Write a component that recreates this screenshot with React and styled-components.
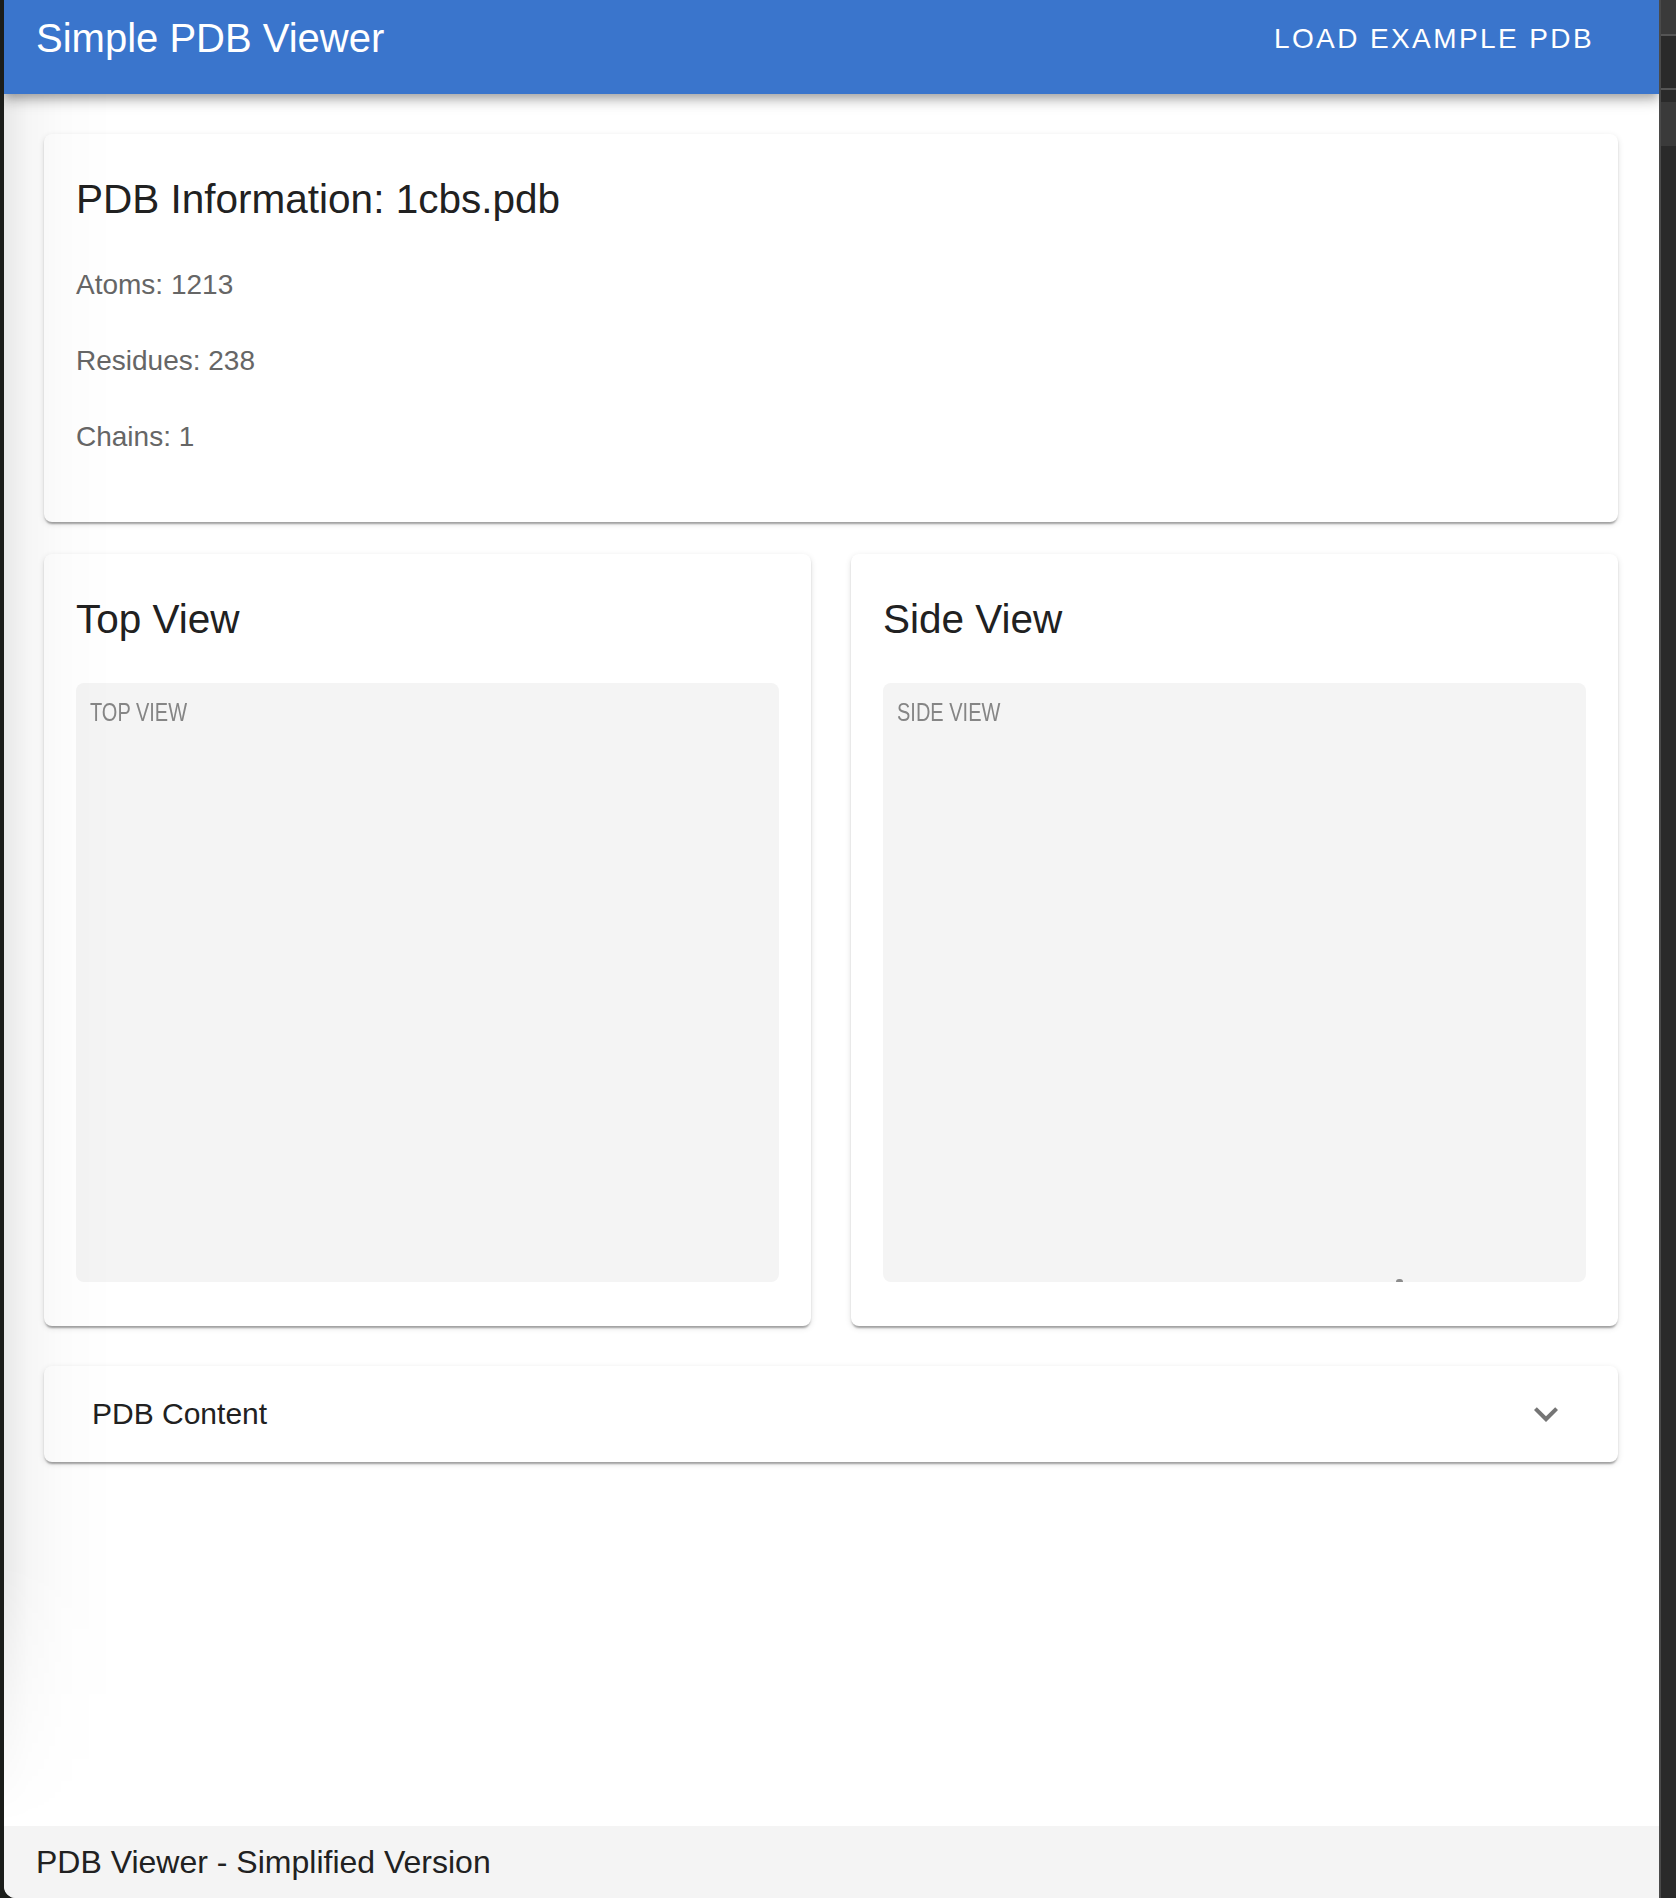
import React from 'react';
import styled, { createGlobalStyle } from 'styled-components';

const GlobalStyle = createGlobalStyle`
  html, body {
    margin: 0;
    padding: 0;
    background: #1b1d1a;
  }
  * {
    box-sizing: border-box;
  }
`;

const Desktop = styled.div`
  display: flex;
  height: 1898px;
  padding-left: 4px;
  font-family: 'Liberation Sans', Arial, Helvetica, sans-serif;
`;

const Window = styled.div`
  position: relative;
  width: 1655px;
  display: flex;
  flex-direction: column;
  background: #ffffff;
  border-bottom-left-radius: 12px;
  overflow: hidden;
`;

// soft shadow that falls over the left side of the page
const EdgeShade = styled.div`
  position: absolute;
  left: 0;
  top: 94px;
  width: 110px;
  height: 1730px;
  pointer-events: none;
  z-index: 2;
  background: linear-gradient(
    to right,
    rgba(0, 0, 0, 0.09) 0px,
    rgba(0, 0, 0, 0.035) 25px,
    rgba(0, 0, 0, 0.01) 60px,
    rgba(0, 0, 0, 0) 110px
  );
  -webkit-mask-image: linear-gradient(to bottom, #000 0%, #000 85%, transparent 100%);
  mask-image: linear-gradient(to bottom, #000 0%, #000 85%, transparent 100%);
`;

const AppBar = styled.header`
  position: relative;
  z-index: 1;
  height: 94px;
  flex-shrink: 0;
  display: flex;
  align-items: flex-start;
  justify-content: space-between;
  padding: 0 49px 0 32px;
  background: #3a75cc;
  color: #ffffff;
  box-shadow: 0 4px 8px -2px rgba(0, 0, 0, 0.2), 0 8px 10px 0 rgba(0, 0, 0, 0.14),
    0 2px 20px 0 rgba(0, 0, 0, 0.12);
`;

const AppTitle = styled.h1`
  margin: 6px 0 0;
  font-size: 40px;
  font-weight: 400;
  line-height: 64px;
`;

const AppButton = styled.button`
  margin: 0;
  padding: 14px 16px;
  border: none;
  background: transparent;
  color: #ffffff;
  font-family: inherit;
  font-size: 28px;
  font-weight: 400;
  line-height: 49px;
  letter-spacing: 2.4px;
  text-transform: uppercase;
  cursor: pointer;
`;

const Main = styled.main`
  flex: 1;
  padding: 40px 41px 0 40px;
`;

const Card = styled.section`
  background: #ffffff;
  border-radius: 8px;
  padding: ${({ $bottom }) => `32px 32px ${$bottom || 32}px`};
  box-shadow: 0 4px 2px -2px rgba(0, 0, 0, 0.2), 0 2px 2px 0 rgba(0, 0, 0, 0.14),
    0 2px 6px 0 rgba(0, 0, 0, 0.12);
`;

const CardTitle = styled.h2`
  margin: 3px 0 ${({ $gap }) => $gap}px;
  font-size: 40.5px;
  font-weight: 400;
  line-height: 60px;
  color: #212121;
`;

const InfoLine = styled.p`
  margin: 0 0 36px;
  font-size: 28px;
  line-height: 40px;
  color: #666666;

  &:last-child {
    margin-bottom: 33px;
  }
`;

const ViewRow = styled.div`
  display: grid;
  grid-template-columns: 1fr 1fr;
  gap: 40px;
  margin-top: 32px;
`;

const ViewBox = styled.div`
  position: relative;
  height: 599px;
  border-radius: 8px;
  background: #f4f4f4;
  padding: 17px 14px;
`;

const ViewLabel = styled.span`
  display: inline-block;
  font-size: 25px;
  line-height: 25px;
  color: #858585;
  text-transform: uppercase;
  transform: scaleX(0.8);
  transform-origin: left center;
  filter: blur(0.3px);
`;

const AtomDot = styled.span`
  position: absolute;
  left: ${({ $x }) => $x}px;
  bottom: 0;
  width: 7px;
  height: 3px;
  border-radius: 4px 4px 0 0;
  background: #8c8c8c;
`;

const Accordion = styled.section`
  margin-top: 40px;
  height: 96px;
  display: flex;
  align-items: center;
  justify-content: space-between;
  padding: 0 48px 0 48px;
  background: #ffffff;
  border-radius: 8px;
  box-shadow: 0 4px 2px -2px rgba(0, 0, 0, 0.2), 0 2px 2px 0 rgba(0, 0, 0, 0.14),
    0 2px 6px 0 rgba(0, 0, 0, 0.12);
`;

const AccordionTitle = styled.span`
  font-size: 30px;
  color: #212121;
`;

const ExpandIcon = styled.svg`
  width: 48px;
  height: 48px;
  fill: rgba(0, 0, 0, 0.54);
`;

const Footer = styled.footer`
  flex-shrink: 0;
  height: 72px;
  padding: 12px 32px;
  background: #f4f4f4;
  font-size: 32px;
  line-height: 48px;
  color: #212121;
`;

const SideStrip = styled.div`
  width: 17px;
  display: flex;
  flex-direction: column;
  border-left: 2px solid #4a4a4a;
  background: #2a2a2a;
`;

const StripBlock = styled.div`
  height: ${({ $h }) => $h}px;
  background: ${({ $bg }) => $bg};
`;

const views = [
  { title: 'Top View', label: 'top view' },
  { title: 'Side View', label: 'side view', dot: 513 },
];

export default function App() {
  return (
    <>
      <GlobalStyle />
      <Desktop>
        <Window>
          <EdgeShade />
          <AppBar>
            <AppTitle>Simple PDB Viewer</AppTitle>
            <AppButton>Load Example PDB</AppButton>
          </AppBar>
          <Main>
            <Card>
              <CardTitle $gap={36}>PDB Information: 1cbs.pdb</CardTitle>
              <InfoLine>Atoms: 1213</InfoLine>
              <InfoLine>Residues: 238</InfoLine>
              <InfoLine>Chains: 1</InfoLine>
            </Card>
            <ViewRow>
              {views.map((v) => (
                <Card key={v.title} $bottom={44}>
                  <CardTitle $gap={34}>{v.title}</CardTitle>
                  <ViewBox>
                    <ViewLabel>{v.label}</ViewLabel>
                    {v.dot && <AtomDot $x={v.dot} />}
                  </ViewBox>
                </Card>
              ))}
            </ViewRow>
            <Accordion>
              <AccordionTitle>PDB Content</AccordionTitle>
              <ExpandIcon viewBox="0 0 24 24">
                <path d="M16.59 8.59 12 13.17 7.41 8.59 6 10l6 6 6-6z" />
              </ExpandIcon>
            </Accordion>
          </Main>
          <Footer>PDB Viewer - Simplified Version</Footer>
        </Window>
        <SideStrip>
          <StripBlock $h={34} $bg="#3a3a3a" />
          <StripBlock $h={2} $bg="#555555" />
          <StripBlock $h={52} $bg="#2a2a2a" />
          <StripBlock $h={2} $bg="#555555" />
          <StripBlock $h={12} $bg="#2a2a2a" />
          <StripBlock $h={44} $bg="#3a3a3a" />
        </SideStrip>
      </Desktop>
    </>
  );
}
